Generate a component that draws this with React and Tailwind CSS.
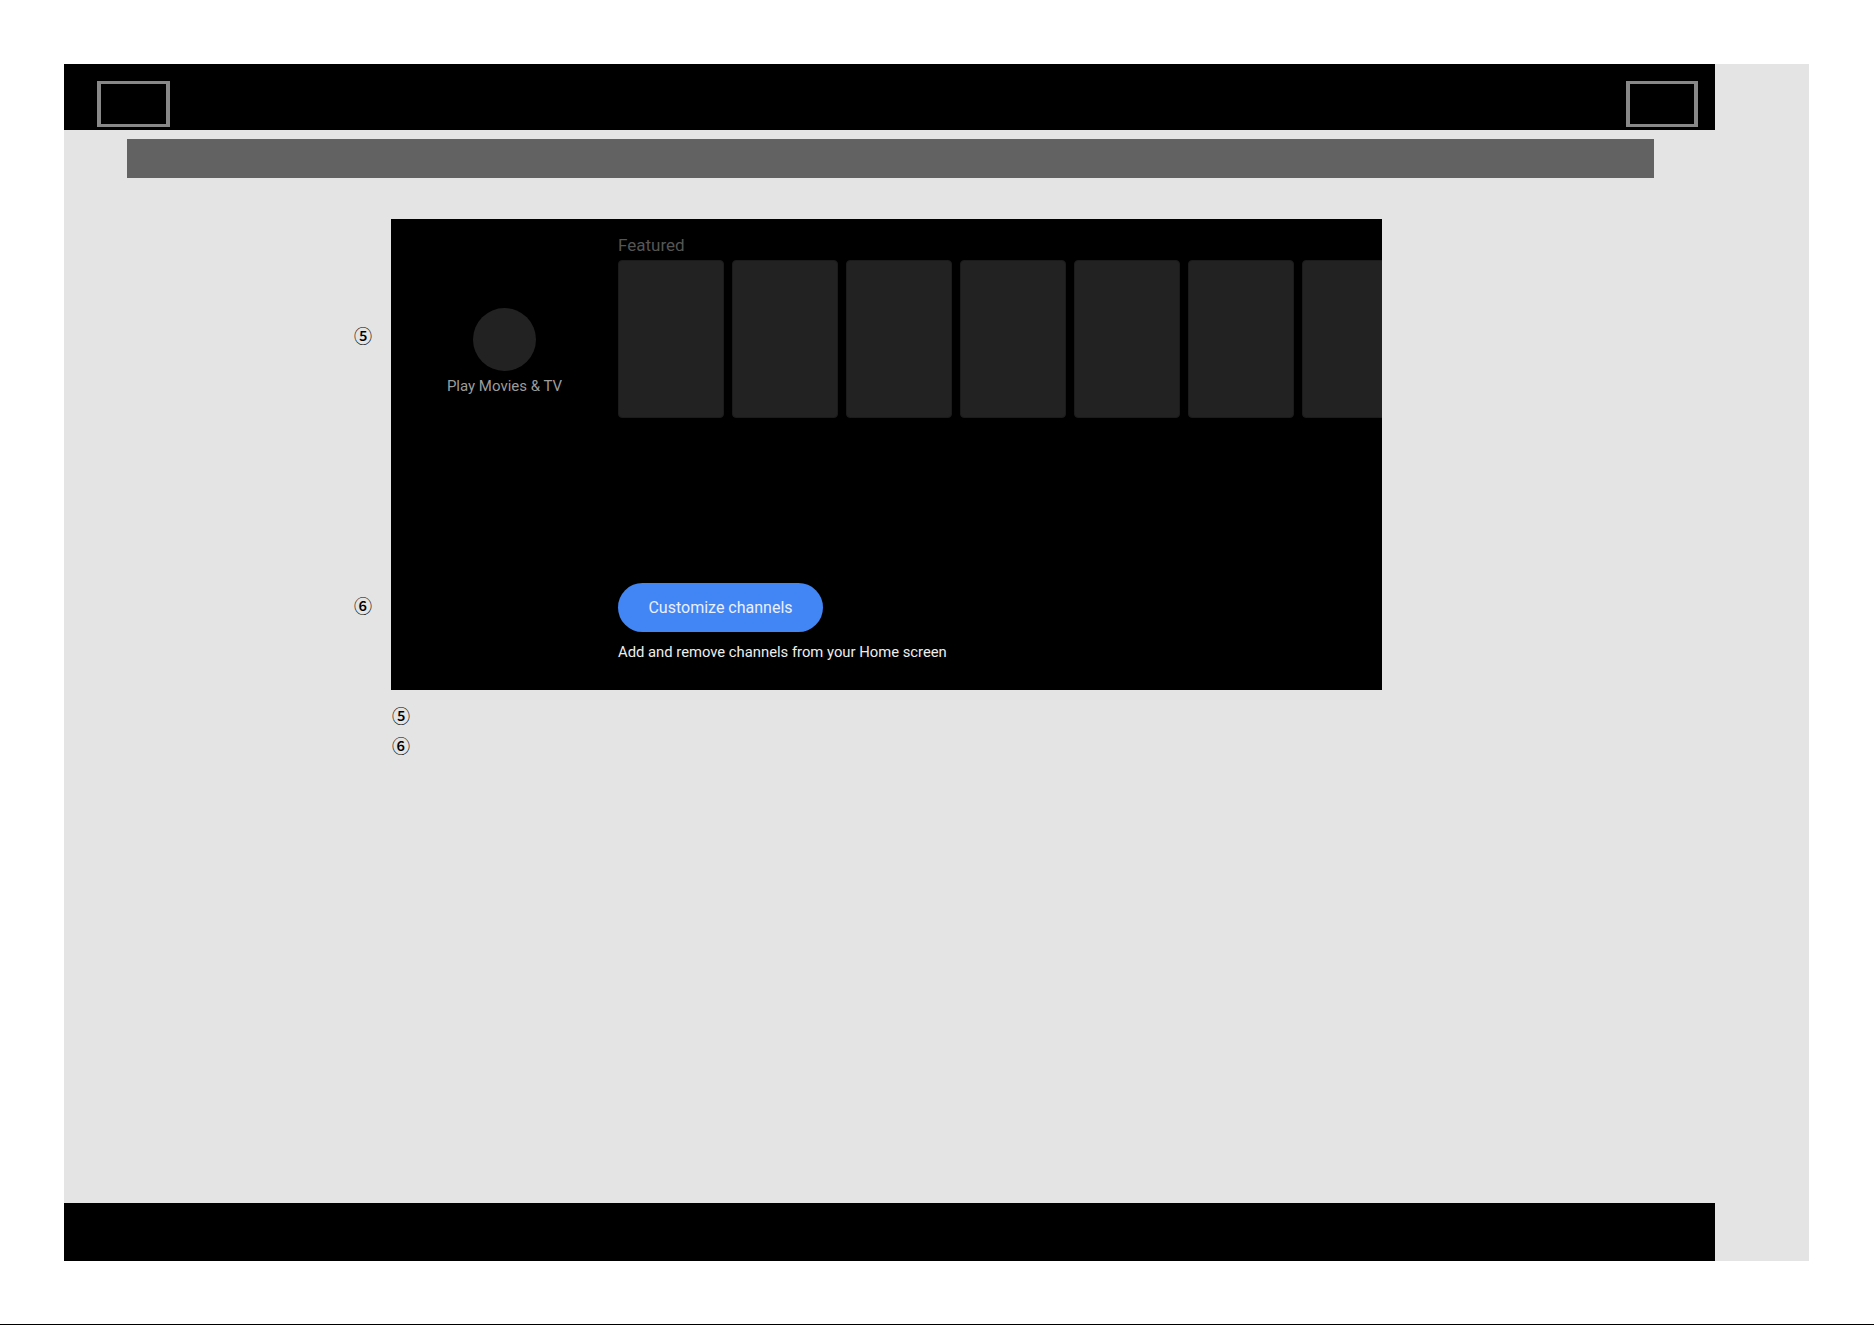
import React from 'react';

const cards = [0, 1, 2, 3, 4, 5, 6];

const Circled = ({ children, className = '' }) => (
    <span className={`block text-[18px] leading-none font-medium text-black font-['Noto_Sans_CJK_JP',sans-serif] ${className}`}>
        {children}
    </span>
);

const TvScreen = () => {
    return (
        <div className="w-[991px] h-[471px] bg-black flex overflow-hidden font-['Roboto',sans-serif]">
            <div className="w-[227px] shrink-0 pt-[89px] flex flex-col items-center">
                <div className="w-[63px] h-[63px] rounded-full bg-[#222222]" />
                <div className="mt-[6px] text-[15px] leading-[18px] text-[#9c9c9c]">Play Movies &amp; TV</div>
            </div>

            <div className="flex-1 min-w-0 pt-4">
                <div className="text-[17px] leading-[20px] text-[#555555]">Featured</div>
                <div className="mt-[5px] flex gap-[8px] overflow-hidden">
                    {cards.map((c) => (
                        <div key={c} className="w-[106px] h-[158px] shrink-0 rounded-[4px] bg-[#222222] border border-[#1b1b1b]" />
                    ))}
                </div>

                <button className="mt-[165px] w-[205px] h-[49px] rounded-full bg-[#4285f4] text-[16px] text-[#eaf0fd]">
                    Customize channels
                </button>
                <div className="mt-[10px] text-[14.8px] leading-[20px] text-[#eeeeee]">
                    Add and remove channels from your Home screen
                </div>
            </div>
        </div>
    );
};

const App = () => {
    return (
        <div className="w-[1874px] h-[1325px] bg-white flex flex-col overflow-hidden">
            <div className="ml-[64px] mt-[64px] w-[1745px] h-[1197px] bg-[#e4e4e4] flex flex-col">
                {/* top bar with the two frame markers */}
                <div className="w-[1651px] h-[66px] bg-black flex items-start justify-between pt-[17px] pl-[33px] pr-[17px]">
                    <div className="w-[73px] h-[46px] border-x-4 border-y-[3px] border-[#888888]" />
                    <div className="w-[72px] h-[46px] border-x-4 border-y-[3px] border-[#888888]" />
                </div>

                <div className="ml-[63px] mt-[9px] w-[1527px] h-[39px] bg-[#626262]" />

                <div className="mt-[41px] ml-[290px] flex">
                    <div className="w-[37px] shrink-0">
                        <Circled className="mt-[107px]">⑤</Circled>
                        <Circled className="mt-[252px]">⑥</Circled>
                    </div>
                    <div>
                        <TvScreen />
                        <div className="mt-[16px] ml-[1px] flex flex-col gap-[12px]">
                            <Circled>⑤</Circled>
                            <Circled>⑥</Circled>
                        </div>
                    </div>
                </div>

                <div className="mt-auto w-[1651px] h-[58px] bg-black" />
            </div>

            <div className="mt-auto h-px w-full bg-black" />
        </div>
    );
};

export default App;
